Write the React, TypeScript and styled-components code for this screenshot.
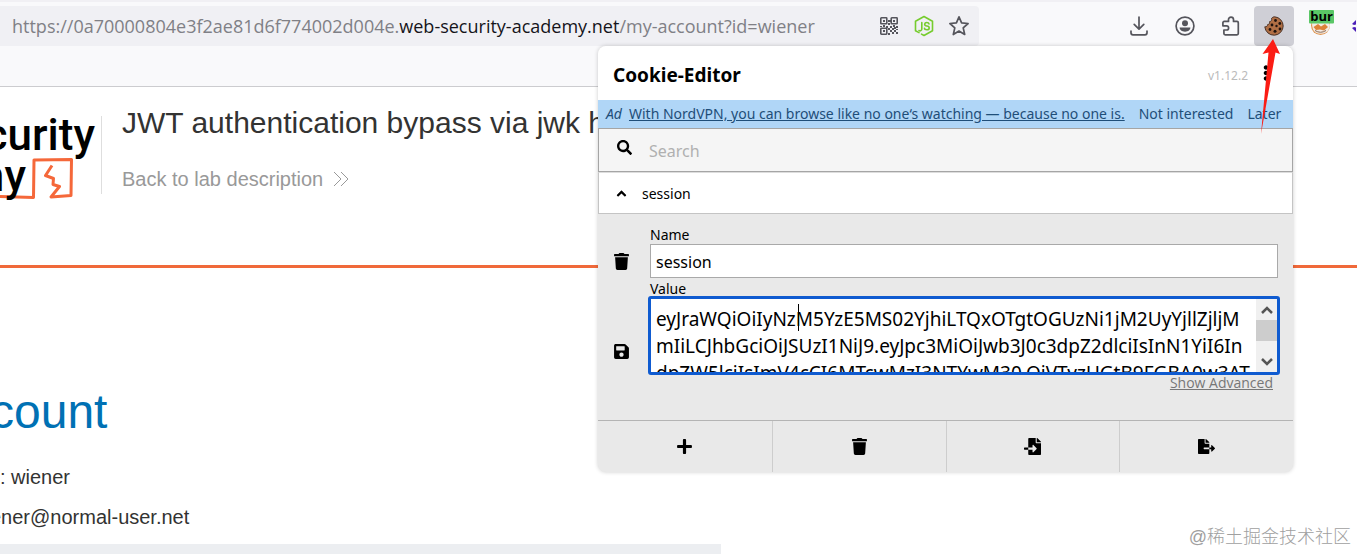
import React from "react";
import styled, { createGlobalStyle } from "styled-components";
import {
  FaAngleUp,
  FaEllipsisV,
  FaFileExport,
  FaFileImport,
  FaNodeJs,
  FaPlus,
  FaSave,
  FaSearch,
  FaTrash,
} from "react-icons/fa";

const ui = `"Noto Sans", "Open Sans", sans-serif`;
const uiNarrow = `"Open Sans", "Noto Sans", sans-serif`;
const arial = `"Liberation Sans", Arial, sans-serif`;

const GlobalStyle = createGlobalStyle`
  *, *::before, *::after { box-sizing: border-box; }
  body { margin: 0; background: #fff; overflow: hidden; }
  button, input, textarea { font: inherit; color: inherit; margin: 0; }
  button { border: 0; padding: 0; background: none; cursor: pointer; }
  h1, h2, p { margin: 0; font-weight: normal; }
`;

const Screen = styled.div`
  position: relative;
  display: flex;
  flex-direction: column;
  min-height: 100vh;
  overflow: hidden;
  font-family: ${arial};
`;

/* Browser toolbar */
const Toolbar = styled.header`
  display: flex;
  align-items: flex-start;
  height: 87px;
  padding-top: 6px;
  background: #f9f9fb;
  border-bottom: 1px solid #cccccf;
  box-shadow: inset 0 2px 0 #f1f0f4;
`;

const UrlBar = styled.div`
  display: flex;
  flex: 1;
  align-items: center;
  height: 40px;
  padding: 0 9px 0 12px;
  background: #f0f0f4;
  border-radius: 0 4px 4px 0;
`;

const Url = styled.div`
  flex: 1;
  white-space: nowrap;
  font: 18px/24px ${uiNarrow};
  color: #808086;
  b { font-weight: normal; color: #15141a; }
`;

const UrlActions = styled.div`
  display: flex;
  gap: 13px;
`;

const IconButton = styled.button`
  display: grid;
  place-items: center;
  width: 22px;
  height: 22px;
  color: #55555c;
`;

const Extensions = styled.div`
  display: flex;
  width: 378px;
  height: 40px;
  align-items: center;
  justify-content: flex-end;
`;

const ToolButton = styled.button<{ $active?: boolean; $width?: number }>`
  display: grid;
  place-items: center;
  width: ${(p) => p.$width ?? 46}px;
  height: 40px;
  color: #55555c;
  background: ${(p) => (p.$active ? "#cfcfd6" : "transparent")};
  border-radius: 4px;
`;

/* Lab page */
const LabHeader = styled.section`
  display: flex;
  height: 181px;
  padding-top: 18px;
  border-bottom: 3px solid #f0693a;
`;

const Logo = styled.div`
  position: relative;
  width: 102px;
  height: 100px;
  overflow: hidden;
`;

const LogoWord = styled.div`
  position: relative;
  display: flex;
  justify-content: flex-end;
  width: 95px;
  height: 41px;
  font: 500 44px/60px Roboto, ${arial};
  color: #000;
  &:last-child { width: 26px; }
`;

const LogoMark = styled.svg`
  position: absolute;
  left: 0;
  bottom: 5px;
`;

const LabInfo = styled.div`
  margin-top: 11px;
  height: 78px;
  margin-left: -1px;
  padding-left: 20px;
  border-left: 1px solid #dedede;
  white-space: nowrap;
`;

const LabTitle = styled.h2`
  margin-top: -11px;
  font-size: 30px;
  line-height: 36px;
  color: #333332;
`;

const BackLink = styled.a`
  display: flex;
  align-items: center;
  gap: 10px;
  margin-top: 26px;
  font-size: 20px;
  line-height: 24px;
  color: #999;
  text-decoration: none;
`;

const Account = styled.main`
  display: flex;
  flex: 1;
  flex-direction: column;
  margin-left: -10px;
  padding-top: 116px;
  color: #333332;
  white-space: nowrap;
`;

const AccountTitle = styled.h1`
  font-size: 48px;
  line-height: 56px;
  color: #0071b4;
`;

const AccountLine = styled.p`
  margin-top: 16px;
  font-size: 20px;
  line-height: 24px;
  ${AccountTitle} + & { margin-top: 25px; }
`;

const FormPanel = styled.div`
  flex: 1;
  width: 731px;
  margin-top: 15px;
  background: #eceef1;
`;

/* Cookie-Editor popup */
const Popup = styled.section`
  position: absolute;
  top: 46px;
  right: 64px;
  width: 695px;
  overflow: hidden;
  border-radius: 8px;
  background: #e9e9e9;
  box-shadow: 0 0 4px rgba(0, 0, 0, 0.2);
  font-family: ${ui};
  color: #000;
`;

const PopupHeader = styled.div`
  display: flex;
  align-items: center;
  height: 54px;
  padding: 4px 19px 0 15px;
  background: #fff;
`;

const PopupTitle = styled.h2`
  flex: 1;
  font-size: 19px;
  font-weight: bold;
`;

const Version = styled.span`
  margin-right: 10px;
  font-size: 12px;
  color: #bbb;
`;

const AdBar = styled.div`
  display: flex;
  align-items: center;
  height: 28px;
  padding: 0 12px 0 8px;
  background: #b0d6f7;
  font-size: 14px;
  line-height: 20px;
  color: #1f4e79;
  white-space: nowrap;
  span { flex: 1; margin-left: 7px; }
  a { color: inherit; }
  button { margin-left: 14px; }
`;

const SearchRow = styled.label`
  display: flex;
  align-items: center;
  height: 44px;
  padding: 0 18px;
  background: #f5f5f5;
  border: 1px solid #a5a5a5;
  svg { flex: none; margin-bottom: 6px; }
`;

const SearchInput = styled.input`
  flex: 1;
  min-width: 0;
  margin-left: 17px;
  padding: 2px 0 0;
  border: 0;
  outline: 0;
  background: none;
  font-size: 16px;
  &::placeholder { color: #b0b0b0; opacity: 1; }
`;

const CookieRow = styled.button`
  display: flex;
  align-items: center;
  width: 100%;
  height: 42px;
  padding: 0 15px;
  gap: 13px;
  background: #fff;
  border: 1px solid #c4c4c4;
  border-top-color: #ddd;
  font-size: 14px;
`;

const Details = styled.div`
  display: flex;
  height: 206px;
  padding: 10px 15px 0 0;
`;

const SideActions = styled.div`
  display: flex;
  flex-direction: column;
  align-items: center;
  width: 47px;
  padding-top: 29px;
  gap: 68px;
`;

const Fields = styled.div`
  display: flex;
  flex: 1;
  flex-direction: column;
  padding-left: 5px;
  font-size: 14px;
  label { height: 20px; line-height: 22px; }
`;

const NameInput = styled.input`
  height: 34px;
  padding: 2px 5px 0;
  border: 1px solid #a9a9a9;
  border-radius: 0;
  background: #fff;
  font-size: 16px;
`;

const ValueBox = styled.div`
  position: relative;
  display: flex;
  height: 79px;
  margin: -2px -2px 0;
  background: #fff;
  border: 3px solid #0f5bd0;
  border-radius: 3px;
`;

const ValueInput = styled.textarea`
  flex: 1;
  min-width: 0;
  padding: 7px 0 0 5px;
  border: 0;
  outline: 0;
  resize: none;
  overflow: hidden;
  background: none;
  white-space: pre;
  font-size: 19px;
  line-height: 27px;
`;

const Caret = styled.span`
  position: absolute;
  top: 5px;
  left: 147px;
  width: 1px;
  height: 27px;
  background: #000;
`;

const Scrollbar = styled.div`
  display: flex;
  flex-direction: column;
  width: 21px;
  background: #f0f0f0;
  button { height: 21px; display: grid; place-items: center; }
  button:last-child { margin-top: auto; }
`;

const Thumb = styled.div`
  height: 21px;
  background: #cdcdcd;
`;

const Advanced = styled.a`
  align-self: flex-end;
  margin-right: 5px;
  font: 14px/16px ${uiNarrow};
  color: #777;
`;

const ActionBar = styled.div`
  display: grid;
  grid-template-columns: repeat(4, 1fr);
  height: 52px;
  border-top: 1px solid #b4b4b4;
`;

const Action = styled.button`
  display: grid;
  place-items: center;
  & + & { border-left: 1px solid #cdcdcd; }
`;

const Arrow = styled.svg`
  position: absolute;
  top: 38px;
  right: 74px;
`;

const Watermark = styled.div`
  position: absolute;
  right: 6px;
  bottom: 4px;
  font: 300 18px/26px "Liberation Sans", "Noto Sans CJK SC", sans-serif;
  color: #a0a0a0;
`;

const QrIcon = () => (
  <svg width="18" height="18" viewBox="0 0 18 18" fill="none" stroke="currentColor" strokeWidth="1.6">
    <rect x="0.8" y="0.8" width="6" height="6" rx="0.6" />
    <rect x="11.2" y="0.8" width="6" height="6" rx="0.6" />
    <rect x="0.8" y="11.2" width="6" height="6" rx="0.6" />
    <path
      fill="currentColor"
      stroke="none"
      d="M3 3h2v2H3zM13 3h2v2h-2zM3 13h2v2H3zM8 3h2v2H8zM10 3h2v2h-2zM8 6h2v2H8zM3 8h2v2H3zM0 9h2v1H0zM6 9h2v2H6zM8 11h2v2H8zM10 9h2v2h-2zM13 8h2v2h-2zM12 11h2v2h-2zM14 10h2v2h-2zM16 9h2v2h-2zM10 13h2v2h-2zM8 16h2v2H8zM14 13h2v2h-2zM16 12h2v1h-2zM12 15h2v2h-2zM16 15h2v2h-2z"
    />
  </svg>
);

const NodeIcon = () => (
  <svg width="20" height="22" viewBox="0 0 20 22" fill="none" stroke="#76cc2e" strokeWidth="1.6" strokeLinecap="round" strokeLinejoin="round">
    <path d="M10 1.500 18.500 6.200V15.800L10 20.500 7.500 19.100M5 17.600 1.500 15.800V6.200L10 1.500" />
    <path d="M7.800 7.500V14a1.800 1.800 0 0 1-2.800 1.500" />
    <path d="M15 8.900Q14.700 7.500 12.800 7.500T10.700 9.200Q10.700 10.800 12.900 11T15.200 12.900Q15.200 14.700 12.900 14.700T10.500 13.200" />
  </svg>
);

const StarIcon = () => (
  <svg width="22" height="22" viewBox="0 0 22 22" fill="none" stroke="currentColor" strokeWidth="1.7" strokeLinejoin="round">
    <path d="M11 1.9 13.6 7.9 20.1 8.5 15.2 12.9 16.7 19.5 11 16.1 5.3 19.5 6.8 12.9 1.9 8.5 8.4 7.9Z" />
  </svg>
);

const DownloadIcon = () => (
  <svg width="18" height="20" viewBox="0 0 18 20" fill="none" stroke="currentColor" strokeWidth="1.7" strokeLinecap="round" strokeLinejoin="round">
    <path d="M9 1v12M4.2 8.4 9 13.2l4.8-4.8M1 15v1.8A2 2 0 0 0 3 18.8h12a2 2 0 0 0 2-2V15" />
  </svg>
);

const AccountIcon = () => (
  <svg width="20" height="20" viewBox="0 0 20 20" fill="none">
    <circle cx="10" cy="10" r="8.9" stroke="currentColor" strokeWidth="1.7" />
    <circle cx="10" cy="7.3" r="3" fill="currentColor" />
    <path d="M4.6 11.6h10.8c0 2.4-2.2 4.1-5.4 4.1s-5.4-1.7-5.4-4.1Z" fill="currentColor" />
  </svg>
);

const PuzzleIcon = () => (
  <svg width="20" height="20" viewBox="0 0 20 20" fill="none" stroke="currentColor" strokeWidth="1.7" strokeLinejoin="round">
    <path d="M7.500 5.400V3.600a2.500 2.500 0 0 1 5 0v1.800h3.500a1.300 1.300 0 0 1 1.300 1.300V17.600a1.300 1.300 0 0 1-1.300 1.300H4.200a1.300 1.300 0 0 1-1.300-1.300v-3.600h2.600a2.100 2.100 0 0 0 0-4.200H1.900V6.700a1.300 1.300 0 0 1 1.300-1.300Z" />
  </svg>
);

const CookieIcon = () => (
  <svg width="20" height="20" viewBox="0 0 20 20">
    <path
      d="M10.500.8a9.200 9.200 0 1 1-9.700 10c1.600.2 2.700-.6 2.800-2.200 1.600-.2 2.300-1.400 1.900-2.900C7.400 5.400 8 4 7.500 2.400 8.300 1.500 9.400.8 10.500.8Z"
      fill="#b06f45"
      stroke="#4a3328"
      strokeWidth="1"
    />
    <g fill="#20140f">
      <circle cx="11.500" cy="4.500" r="1.400" />
      <circle cx="15.800" cy="7.500" r="1.400" />
      <circle cx="8" cy="9" r="1.400" />
      <circle cx="12.500" cy="10" r="1.200" />
      <circle cx="6" cy="13.500" r="1.400" />
      <circle cx="11" cy="15.200" r="1.500" />
      <circle cx="16" cy="13" r="1.400" />
    </g>
  </svg>
);

const BurpIcon = () => (
  <svg width="26" height="32" viewBox="0 0 26 32">
    <circle cx="11.500" cy="15.500" r="9.500" fill="#e0954f" />
    <path d="M3 13h17l1 2q-1 6-4 7.500-5.500 2.500-10.500 0Q3 20 3 13Z" fill="#f3ebe4" />
    <path d="M4.500 17 9 14l3 2.500 4-2.500 3 3-4 3.500-4-1-4 .5Z" fill="#dd8238" />
    <path d="M6 20.500q5.500 3.500 11 0" fill="none" stroke="#8a6a55" strokeWidth="1" />
    <rect x="0" y="0" width="25" height="13.500" rx="1" fill="#5ac766" />
    <text x="12.500" y="11" textAnchor="middle" fontFamily="Open Sans, sans-serif" fontWeight="bold" fontSize="13" fill="#000">
      bur
    </text>
  </svg>
);

const NextIcon = () => (
  <svg width="4" height="12" viewBox="0 0 4 12" fill="#4b1fb8">
    <path d="M0 4 4 0v4.500L2 5ZM0 8l4 4V7.500L2 7Z" />
  </svg>
);

const TOKEN = [
  "eyJraWQiOiIyNzM5YzE5MS02YjhiLTQxOTgtOGUzNi1jM2UyYjllZjljM",
  "mIiLCJhbGciOiJSUzI1NiJ9.eyJpc3MiOiJwb3J0c3dpZ2dlciIsInN1YiI6In",
  "dpZW5lciIsImV4cCI6MTcwMzI3NTYwM30.QiVTyzUGtB9FGBA0w3AT",
].join("\n");

export default function App() {
  return (
    <Screen>
      <GlobalStyle />
      <Toolbar>
        <UrlBar>
          <Url>
            https://0a70000804e3f2ae81d6f774002d004e.<b>web-security-academy.net</b>/my-account?id=wiener
          </Url>
          <UrlActions>
            <IconButton aria-label="QR code"><QrIcon /></IconButton>
            <IconButton aria-label="Node.js"><NodeIcon /></IconButton>
            <IconButton aria-label="Bookmark"><StarIcon /></IconButton>
          </UrlActions>
        </UrlBar>
        <Extensions>
          <ToolButton aria-label="Downloads"><DownloadIcon /></ToolButton>
          <ToolButton aria-label="Account"><AccountIcon /></ToolButton>
          <ToolButton aria-label="Extensions"><PuzzleIcon /></ToolButton>
          <ToolButton aria-label="Cookie-Editor" $active $width={40}><CookieIcon /></ToolButton>
          <ToolButton aria-label="Burp" $width={56}><BurpIcon /></ToolButton>
          <ToolButton aria-label="More" $width={7}><NextIcon /></ToolButton>
        </Extensions>
      </Toolbar>

      <LabHeader>
        <Logo>
          <LogoMark width="74" height="42" viewBox="0 0 74 42" fill="none" stroke="#f5683a" strokeWidth="3" strokeLinejoin="round">
            <path d="M0 38.500 33.500 39.500 34 2 71.500 1.500 71 37.500 51 39 59.500 28.500 53 26.500 53.500 20.500 45.500 17.500 52 7.500" />
          </LogoMark>
          <LogoWord>curity</LogoWord>
          <LogoWord>my</LogoWord>
        </Logo>
        <LabInfo>
          <LabTitle>JWT authentication bypass via jwk h</LabTitle>
          <BackLink href="#lab">
            Back to lab description
            <svg width="16" height="16" viewBox="0 0 16 16" fill="none" stroke="#999" strokeWidth="1">
              <path d="M1 1l7 7-7 7M8 1l7 7-7 7" />
            </svg>
          </BackLink>
        </LabInfo>
      </LabHeader>

      <Account>
        <AccountTitle>count</AccountTitle>
        <AccountLine>s: wiener</AccountLine>
        <AccountLine>ener@normal-user.net</AccountLine>
        <FormPanel />
      </Account>

      <Popup>
        <PopupHeader>
          <PopupTitle>Cookie-Editor</PopupTitle>
          <Version>v1.12.2</Version>
          <button aria-label="Menu"><FaEllipsisV size={16} /></button>
        </PopupHeader>
        <AdBar>
          <i>Ad</i>
          <span>
            <a href="#ad">With NordVPN, you can browse like no one‘s watching — because no one is.</a>
          </span>
          <button>Not interested</button>
          <button>Later</button>
        </AdBar>
        <SearchRow>
          <FaSearch size={15} />
          <SearchInput placeholder="Search" aria-label="Search" />
        </SearchRow>
        <CookieRow>
          <FaAngleUp size={15} />
          session
        </CookieRow>
        <Details>
          <SideActions>
            <button aria-label="Delete cookie"><FaTrash size={17} /></button>
            <button aria-label="Save cookie"><FaSave size={17} /></button>
          </SideActions>
          <Fields>
            <label htmlFor="cookie-name">Name</label>
            <NameInput id="cookie-name" defaultValue="session" />
            <label htmlFor="cookie-value">Value</label>
            <ValueBox>
              <ValueInput id="cookie-value" defaultValue={TOKEN} spellCheck={false} />
              <Caret />
              <Scrollbar>
                <button aria-label="Scroll up">
                  <svg width="12" height="8" viewBox="0 0 12 8" fill="none" stroke="#555" strokeWidth="2.500"><path d="M1 7l5-5 5 5" /></svg>
                </button>
                <Thumb />
                <button aria-label="Scroll down">
                  <svg width="12" height="8" viewBox="0 0 12 8" fill="none" stroke="#555" strokeWidth="2.500"><path d="M1 1l5 5 5-5" /></svg>
                </button>
              </Scrollbar>
            </ValueBox>
            <Advanced href="#advanced">Show Advanced</Advanced>
          </Fields>
        </Details>
        <ActionBar>
          <Action aria-label="Add"><FaPlus size={17} /></Action>
          <Action aria-label="Delete all"><FaTrash size={17} /></Action>
          <Action aria-label="Import"><FaFileImport size={17} /></Action>
          <Action aria-label="Export"><FaFileExport size={17} /></Action>
        </ActionBar>
      </Popup>

      <Arrow width="24" height="98" viewBox="0 0 24 98" fill="#fb1c14">
        <path d="M14 1 21 16 16.500 14.500 2 96 9.500 14.500 3.500 16Z" />
      </Arrow>
      <Watermark>@稀土掘金技术社区</Watermark>
    </Screen>
  );
}
